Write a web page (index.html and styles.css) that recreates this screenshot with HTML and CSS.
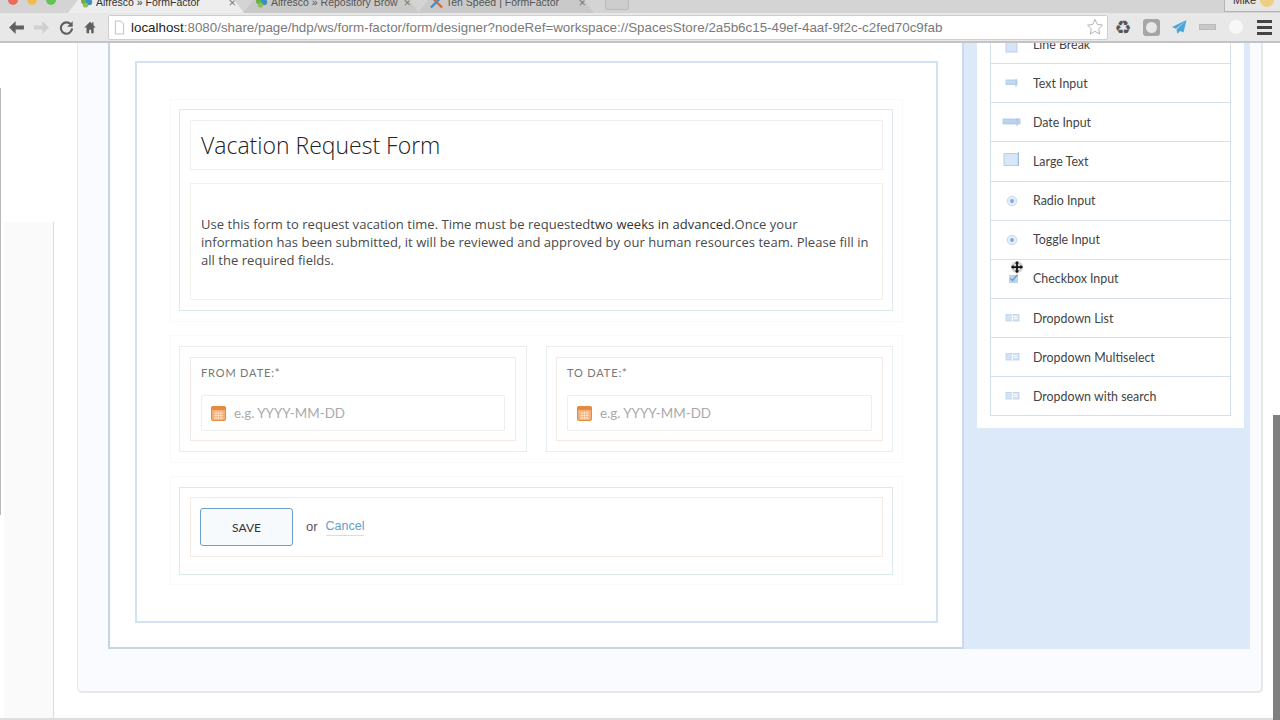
FILE: index.html
```html
<!DOCTYPE html>
<html lang="en">
<head>
<meta charset="utf-8">
<title>Alfresco » FormFactor</title>
<link rel="stylesheet" href="styles.css">
</head>
<body>
<header class="chrome">
  <div class="tabstrip">
    <div class="lights"><span class="light red"></span><span class="light yellow"></span><span class="light green"></span></div>
    <div class="tab active">
      <svg class="favicon" viewBox="0 0 12 12"><circle cx="4" cy="5" r="3.5" fill="#6ab04c"/><circle cx="8.5" cy="6" r="3.2" fill="#3f8fc4"/><circle cx="5" cy="9" r="2.6" fill="#8cc152"/></svg>
      <span class="tab-title">Alfresco » FormFactor</span><span class="tab-x">×</span>
    </div>
    <div class="tab">
      <svg class="favicon" viewBox="0 0 12 12"><circle cx="4" cy="5" r="3.5" fill="#6ab04c"/><circle cx="8.5" cy="6" r="3.2" fill="#3f8fc4"/><circle cx="5" cy="9" r="2.6" fill="#8cc152"/></svg>
      <span class="tab-title">Alfresco » Repository Brow</span><span class="tab-x">×</span>
    </div>
    <div class="tab">
      <svg class="favicon" viewBox="0 0 14 12"><path d="M1 0 L13 12" stroke="#e8632c" stroke-width="2.4"/><path d="M13 0 L1 12" stroke="#3f8fc4" stroke-width="2.4"/></svg>
      <span class="tab-title">Ten Speed | FormFactor</span><span class="tab-x">×</span>
    </div>
    <div class="newtab"></div>
    <div class="profile"><span class="profile-name">Mike</span><span class="profile-dot"></span></div>
  </div>
  <div class="toolbar">
    <svg class="nav" viewBox="0 0 16 16"><path d="M15 6.2H7.2V2L1 8l6.2 6V9.8H15z" fill="#5f5f5f"/></svg>
    <svg class="nav fwd" viewBox="0 0 16 16"><path d="M1 6.2h7.8V2L15 8l-6.2 6V9.8H1z" fill="#cfcfcf"/></svg>
    <svg class="nav reload" viewBox="0 0 16 16"><path d="M13 5.2A6 6 0 1 0 14 9" fill="none" stroke="#5f5f5f" stroke-width="2.2"/><path d="M14.6 1.2v6h-6z" fill="#5f5f5f"/></svg>
    <svg class="nav home" viewBox="0 0 16 16"><path d="M8 1.5 1.5 8H4v6.5h3v-4h2.4v4h2.8V8h2.3L12 5.4V2h-1.6v1.8z" fill="#5f5f5f"/></svg>
    <div class="omnibox">
      <svg class="pageicon" viewBox="0 0 12 16"><path d="M1.5 1h6l3 3v11h-9z" fill="#fff" stroke="#bbb"/></svg>
      <span class="url"><span class="host">localhost</span>:8080/share/page/hdp/ws/form-factor/form/designer?nodeRef=workspace://SpacesStore/2a5b6c15-49ef-4aaf-9f2c-c2fed70c9fab</span>
      <svg class="star" viewBox="0 0 18 18"><path d="M9 1.5l2.3 4.9 5.2.7-3.8 3.6 1 5.3L9 13.4 4.300 16l1-5.300L1.500 7.100l5.200-.7z" fill="#fff" stroke="#b5b5b5"/></svg>
    </div>
    <span class="recycle">♻</span>
    <span class="ext-square"><span class="ext-square-in"></span></span>
    <svg class="ext-plane" viewBox="0 0 16 16"><path d="M15.500 1 1 8l4 1.800zM15.500 1 5.500 10.500 6.500 15l2.500-3 3.500 1.500z" fill="#4aa6d6"/></svg>
    <span class="ext-pill"></span>
    <span class="ext-circle"></span>
    <div class="menu"><span class="bar"></span><span class="bar"></span><span class="bar"></span></div>
  </div>
</header>

<div class="viewport">
  <div class="page">
    <aside class="rail"><div class="rail-fill"></div></aside>
    <main class="main">
      <div class="card">
        <section class="designer">
          <form class="form">
            <div class="group">
              <div class="group-in stack">
                <div class="field title-field"><h1 class="title">Vacation Request Form</h1></div>
                <div class="field desc-field"><p class="desc">Use this form to request vacation time. Time must be requested<b>two weeks in advanced.</b>Once your information has been submitted, it will be reviewed and approved by our human resources team. Please fill in all the required fields.</p></div>
              </div>
            </div>
            <div class="group two">
              <div class="col">
                <div class="field date-field">
                  <label class="date-label">From date:*</label>
                  <div class="date-input">
                    <svg class="cal" viewBox="0 0 15 16"><rect x=".5" y="1.500" width="14" height="14" rx="1.500" fill="#f3b078" stroke="#e58a3e"/><rect x=".5" y="1.500" width="14" height="3.500" fill="#e58a3e"/><path d="M3 8h9M3 10.500h9M3 13h9M5 6.500v8M7.500 6.500v8M10 6.500v8" stroke="#fbe3cd" stroke-width=".8"/></svg>
                    <span class="placeholder">e.g. YYYY-MM-DD</span>
                  </div>
                </div>
              </div>
              <div class="col">
                <div class="field date-field">
                  <label class="date-label">To date:*</label>
                  <div class="date-input">
                    <svg class="cal" viewBox="0 0 15 16"><rect x=".5" y="1.500" width="14" height="14" rx="1.500" fill="#f3b078" stroke="#e58a3e"/><rect x=".5" y="1.500" width="14" height="3.500" fill="#e58a3e"/><path d="M3 8h9M3 10.500h9M3 13h9M5 6.500v8M7.500 6.500v8M10 6.500v8" stroke="#fbe3cd" stroke-width=".8"/></svg>
                    <span class="placeholder">e.g. YYYY-MM-DD</span>
                  </div>
                </div>
              </div>
            </div>
            <div class="group last">
              <div class="group-in last-in">
                <div class="field actions">
                  <button class="save" type="button">SAVE</button>
                  <span class="or">or</span>
                  <a class="cancel">Cancel</a>
                </div>
              </div>
            </div>
          </form>
        </section>
        <section class="stage">
          <ul class="palette">
            <li class="item"><span class="ico"><svg viewBox="0 0 20 20"><rect x="4" y="1" width="11" height="17" fill="#d5e4f6" stroke="#bcd2ec"/></svg></span>Line Break</li>
            <li class="item"><span class="ico"><svg viewBox="0 0 20 20"><rect x="4" y="7" width="11" height="4.500" fill="#c4d9f1" stroke="#aac7e8" stroke-width=".8"/><path d="M14 6v8" stroke="#aac7e8"/></svg></span>Text Input</li>
            <li class="item"><span class="ico"><svg viewBox="0 0 20 20"><rect x="1" y="7" width="17" height="5" fill="#bcd3ee" stroke="#a9c5e6" stroke-width=".8"/><path d="M15 6v8" stroke="#a9c5e6"/></svg></span>Date Input</li>
            <li class="item"><span class="ico"><svg viewBox="0 0 20 20"><rect x="2" y="2.500" width="14" height="12" fill="#d8e7f8" stroke="#b5cfec"/><path d="M16.500 1v14" stroke="#9dbde2"/></svg></span>Large Text</li>
            <li class="item"><span class="ico"><svg viewBox="0 0 20 20"><circle cx="10" cy="10" r="4.800" fill="#e3eefa" stroke="#c8dbf1"/><circle cx="10" cy="10" r="1.900" fill="#7fa8d8"/></svg></span>Radio Input</li>
            <li class="item"><span class="ico"><svg viewBox="0 0 20 20"><circle cx="10" cy="10" r="4.800" fill="#e3eefa" stroke="#c8dbf1"/><circle cx="10" cy="10" r="1.900" fill="#7fa8d8"/></svg></span>Toggle Input</li>
            <li class="item"><span class="ico"><svg viewBox="0 0 20 20"><rect x="7" y="6" width="9" height="8" fill="#bcd3ee"/><path d="M8.500 9.500l2 2 5-6" fill="none" stroke="#6f9ad0" stroke-width="1.200"/></svg></span>Checkbox Input</li>
            <li class="item"><span class="ico"><svg viewBox="0 0 20 20"><rect x="4" y="6.500" width="13" height="6.500" fill="#d2e3f6" stroke="#bcd2ec" stroke-width=".8"/><path d="M10.500 6.500v6.500M12 8.500h3.500M12 10.500h3.500" stroke="#fff" stroke-width=".9"/></svg></span>Dropdown List</li>
            <li class="item"><span class="ico"><svg viewBox="0 0 20 20"><rect x="4" y="6.500" width="13" height="6.500" fill="#d2e3f6" stroke="#bcd2ec" stroke-width=".8"/><path d="M10.500 6.500v6.500M12 8.500h3.500M12 10.500h3.500" stroke="#fff" stroke-width=".9"/></svg></span>Dropdown Multiselect</li>
            <li class="item"><span class="ico"><svg viewBox="0 0 20 20"><rect x="4" y="6.500" width="13" height="6.500" fill="#d2e3f6" stroke="#bcd2ec" stroke-width=".8"/><path d="M10.500 6.500v6.500M12 8.500h3.500M12 10.500h3.500" stroke="#fff" stroke-width=".9"/></svg></span>Dropdown with search</li>
          </ul>
        </section>
      </div>
    </main>
  </div>
  <div class="scrollbar"><div class="thumb"></div></div>
  <span class="window-edge"></span>
  <svg class="move-cursor" viewBox="0 0 16 16"><circle cx="8" cy="8" r="7" fill="#8a8a8a" opacity=".35"/><path d="M8 1l2.600 3H9v3h3V5.400L15 8l-3 2.600V9H9v3h1.600L8 15l-2.600-3H7V9H4v1.600L1 8l3-2.600V7h3V4H5.400z" fill="#111"/></svg>
</div>
</body>
</html>
```
FILE: styles.css
```css
* { box-sizing: border-box; }
html, body { margin: 0; padding: 0; }
body {
  width: 1280px;
  height: 720px;
  overflow: hidden;
  background: #fff;
  font-family: "Open Sans", sans-serif;
  color: #444;
}

/* Browser chrome */
.chrome { height: 43px; display: flex; flex-direction: column; border-bottom: 2px solid #c4c4c4; }
.tabstrip { height: 13px; flex: none; display: flex; background: #d4d4d4; overflow: hidden; }
.lights { width: 68px; flex: none; display: flex; gap: 9px; padding-left: 8px; margin-top: -5px; }
.light { width: 10px; height: 10px; border-radius: 50%; }
.red { background: #ec6a5e; }
.yellow { background: #f0bd50; }
.green { background: #62c454; }
.tab {
  width: 176px;
  flex: none;
  margin-right: -1px;
  padding: 0 8px 0 12px;
  display: flex;
  align-items: flex-start;
  background: #c9c9c9;
  clip-path: polygon(0 100%, 10px 0, calc(100% - 10px) 0, 100% 100%);
  font: 10.5px/11px "Liberation Sans", sans-serif;
  color: #555;
}
.tab.active { background: #ededed; color: #333; }
.favicon { width: 13px; height: 12px; margin: -4px 3px 0 0; flex: none; }
.tab-title { flex: 1; white-space: nowrap; overflow: hidden; margin-top: -3px; }
.tab-x { margin-top: -3px; color: #777; font-size: 13px; }
.newtab { width: 24px; height: 10px; margin-left: 12px; background: #cdcdcd; border: 1px solid #bbb; border-top: 0; border-radius: 0 0 3px 3px; }
.profile {
  margin-left: auto;
  width: 56px;
  height: 12px;
  padding-left: 8px;
  display: flex;
  gap: 4px;
  background: #e6e6e6;
  border-left: 1px solid #b5b5b5;
  border-bottom: 1px solid #b5b5b5;
  font: 11px/11px "Liberation Sans", sans-serif;
  color: #333;
}
.profile-name { margin-top: -5px; }
.profile-dot { width: 14px; height: 14px; margin-top: -7px; border-radius: 50%; background: #f0cf85; }
.toolbar { flex: 1; display: flex; align-items: center; background: #e8e8e8; padding: 0 7px 0 8px; }
.nav { width: 17px; height: 17px; flex: none; }
.fwd { margin-left: 8px; }
.reload { margin-left: 9px; width: 15px; height: 15px; }
.home { margin-left: 9px; width: 14px; height: 15px; }
.omnibox {
  width: 1000px;
  height: 25px;
  margin-left: 11px;
  flex: none;
  display: flex;
  align-items: center;
  padding: 0 3px 0 5px;
  background: #fff;
  border: 1px solid #cfcfcf;
  border-radius: 2px;
}
.pageicon { width: 11px; height: 15px; flex: none; }
.url { flex: 1; margin-left: 6px; font: 13.36px "Liberation Sans", sans-serif; color: #7a7a7a; white-space: nowrap; overflow: hidden; }
.host { color: #222; }
.star { width: 18px; height: 18px; flex: none; }
.recycle { width: 22px; margin-left: 4px; flex: none; text-align: center; font: 19px/25px "DejaVu Sans", sans-serif; color: #555; }
.ext-square { width: 17px; height: 17px; margin-left: 9px; flex: none; display: flex; align-items: center; justify-content: center; background: #a6a6a6; border-radius: 3px; }
.ext-square-in { width: 11px; height: 11px; border-radius: 50%; background: #e8e8e8; }
.ext-plane { width: 16px; height: 16px; margin-left: 11px; flex: none; }
.ext-pill { width: 17px; height: 6px; margin-left: 12px; flex: none; background: #c8c8c8; border: 1px solid #bbb; }
.ext-circle { width: 14px; height: 14px; margin-left: 13px; flex: none; border-radius: 50%; background: #f7f7f7; }
.menu { width: 15px; margin-left: 14px; flex: none; display: flex; flex-direction: column; gap: 3px; }
.bar { height: 3px; background: #444; }

/* Page */
.viewport { position: relative; height: 677px; display: flex; overflow: hidden; }
.page { width: 1273px; flex: none; display: flex; border-bottom: 2px solid #dedede; }
.rail { width: 54px; flex: none; padding: 179px 0 0 4px; }
.rail-fill { height: 100%; background: #fafafa; border-right: 1px solid #dcdcdc; }
.main { flex: 1; padding-left: 23px; }
.card {
  width: 1186px;
  height: 670px;
  margin-top: -20px;
  display: flex;
  padding: 0 11px 42px 30px;
  background: #fafbff;
  border: 2px solid #e8e8e8;
  border-width: 0 2px 2px 1px;
  border-radius: 0 0 5px 5px;
}
.designer {
  width: 856px;
  flex: none;
  padding: 38px 24px 24px 25px;
  background: #fff;
  border: 2px solid #c6d4e4;
  border-top: 0;
  border-right-color: #cbd8ee;
}
.form {
  height: 100%;
  padding: 36px 33px 0 33px;
  display: flex;
  flex-direction: column;
  gap: 13px;
  border: 2px solid #d3e2f0;
}
.group { padding: 9px 9px 10px 8px; border: 1px solid #f9f9f9; }
.group.last { padding-top: 10px; padding-bottom: 9px; }
.group.two { display: grid; grid-template-columns: 348px 347px; column-gap: 19px; padding-top: 10px; }
.group-in { padding: 10px 9px 10px 10px; border: 1px solid #dceae9; }
.last-in { padding-top: 9px; padding-bottom: 17px; }
.stack { display: flex; flex-direction: column; gap: 13px; }
.col { padding: 10px; border: 1px solid #e8eeee; }
.col + .col { padding-left: 9px; padding-right: 9px; }
.field { border: 1px solid #efefef; }
.title-field { height: 50px; padding: 0 10px; display: flex; align-items: center; }
.title { margin: 0; font-size: 23px; font-weight: 300; color: #222; }
.desc-field { height: 117px; padding: 0 10px; display: flex; align-items: center; border-color: #f3efe9; }
.desc { margin: 0; font-size: 13px; line-height: 18px; letter-spacing: .04px; color: #4a4a4a; }
.desc b { font-weight: 500; color: #333; }
.date-field { height: 84px; padding: 8px 10px 0; border-color: #f3e9e4; }
.date-label { display: block; font: 11px/13px Lato, sans-serif; letter-spacing: .85px; text-transform: uppercase; color: #777; }
.date-input { height: 36px; margin-top: 16px; padding-left: 9px; display: flex; align-items: center; gap: 8px; border: 1px solid #eee; border-radius: 2px; }
.cal { width: 15px; height: 16px; flex: none; }
.placeholder { font: 13.4px Lato, sans-serif; color: #aaa; }
.actions { height: 60px; padding-left: 9px; display: flex; align-items: center; border-color: #f3ebe3; }
.save {
  width: 93px;
  height: 38px;
  padding: 0;
  background: #f7fafd;
  border: 1px solid #6f9fc8;
  border-radius: 3px;
  font: 12px Lato, sans-serif;
  color: #333;
}
.or { margin-left: 13px; margin-top: -2px; font: 13px "Liberation Sans", sans-serif; color: #555; }
.cancel { margin-left: 8px; padding-bottom: 2px; font: 12.5px "Liberation Sans", sans-serif; color: #6a9cc8; border-bottom: 1px solid #e7d8d0; }

.stage { flex: 1; padding: 0 6px 0 13px; background: #dbe9f8; }
.palette { margin: 0; padding: 2px 13px 12px; list-style: none; background: #fff; }
.item {
  height: 39.15px;
  display: flex;
  align-items: center;
  gap: 11px;
  padding-left: 11px;
  border: 1px solid #d6e0ea;
  border-top: 0;
  font: 12.4px Lato, sans-serif;
  color: #444;
}
.ico { width: 20px; height: 20px; flex: none; }
.ico svg { display: block; width: 20px; height: 20px; }

.scrollbar { flex: 1; padding-top: 372px; }
.thumb { height: 305px; background: #7f7f7f; }
.window-edge { position: absolute; left: 0; top: 45px; width: 1px; height: 427px; background: #bbb; }
.move-cursor { position: absolute; left: 1010px; top: 217px; width: 14px; height: 14px; }
```
